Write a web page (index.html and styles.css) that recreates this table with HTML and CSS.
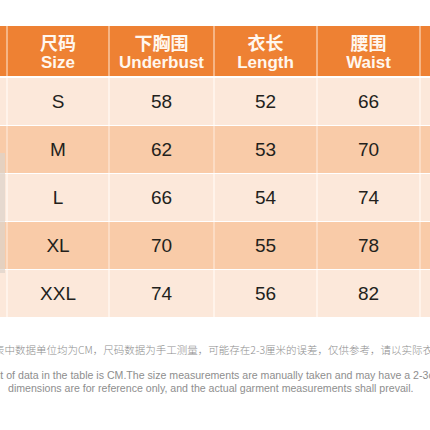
FILE: index.html
```html
<!DOCTYPE html>
<html>
<head>
    <meta charset="utf-8" />
    <link rel="stylesheet" href="styles.css">
</head>
<body>
    <section class="sheet">
        <div class="row head">
            <div class="cell edge"></div>
            <div class="cell"><span class="cn">尺码</span><span class="en">Size</span></div>
            <div class="cell"><span class="cn">下胸围</span><span class="en">Underbust</span></div>
            <div class="cell"><span class="cn">衣长</span><span class="en">Length</span></div>
            <div class="cell"><span class="cn">腰围</span><span class="en">Waist</span></div>
            <div class="cell edge"></div>
        </div>

        <div class="row light">
            <div class="cell edge"></div>
            <div class="cell">S</div><div class="cell">58</div><div class="cell">52</div><div class="cell">66</div>
            <div class="cell edge"></div>
        </div>
        <div class="row peach">
            <div class="cell edge"></div>
            <div class="cell">M</div><div class="cell">62</div><div class="cell">53</div><div class="cell">70</div>
            <div class="cell edge"></div>
        </div>
        <div class="row light">
            <div class="cell edge"></div>
            <div class="cell">L</div><div class="cell">66</div><div class="cell">54</div><div class="cell">74</div>
            <div class="cell edge"></div>
        </div>
        <div class="row peach">
            <div class="cell edge"></div>
            <div class="cell">XL</div><div class="cell">70</div><div class="cell">55</div><div class="cell">78</div>
            <div class="cell edge"></div>
        </div>
        <div class="row light">
            <div class="cell edge"></div>
            <div class="cell">XXL</div><div class="cell">74</div><div class="cell">56</div><div class="cell">82</div>
            <div class="cell edge"></div>
        </div>

        <div class="photo-edge"></div>
    </section>

    <section class="note">
        <p class="cn-line">表中数据单位均为CM，尺码数据为手工测量，可能存在2-3厘米的误差，仅供参考，请以实际衣服为准。</p>
        <p class="en-line first">The unit of data in the table is CM.The size measurements are manually taken and may have a 2-3cm error. The</p>
        <p class="en-line second">dimensions are for reference only, and the actual garment measurements shall prevail.</p>
    </section>
</body>
</html>
```

FILE: styles.css
```css
* {
    padding: 0;
    margin: 0;
    box-sizing: border-box;
}

body {
    background-color: white;
    overflow: hidden;
    width: 430px;
    height: 430px;
}

.sheet {
    position: relative;
    display: flex;
    flex-direction: column;
    gap: 1px;
    padding-top: 26px;
    background-color: white;
}

.row {
    display: grid;
    grid-template-columns: 6px 100px 103px 101px 101px 1fr;
    column-gap: 2px;
    height: 47px;
    font-family: 'Liberation Sans', Arial, sans-serif;
}

.cell {
    display: flex;
    flex-direction: column;
    align-items: center;
    justify-content: center;
    font-size: 19px;
    color: #231f1c;
}

.head {
    height: 50px;
    margin-bottom: 1px;
    background-color: #f6b585;
}
.head .cell {
    background-color: #ee8133;
    color: #fff7ef;
    font-weight: bold;
}
.head .cn {
    font-family: 'Noto Sans CJK SC', sans-serif;
    font-size: 18px;
    line-height: 22px;
}
.head .en {
    font-size: 17px;
    line-height: 19px;
}

.light {
    background-color: #fff3ea;
}
.light .cell {
    background-color: #fce8da;
}

.peach {
    background-color: #fcdcc4;
}
.peach .cell {
    background-color: #f9cba8;
}

/* bit of the product photo peeking in on the left */
.photo-edge {
    position: absolute;
    left: 0;
    top: 153px;
    width: 5px;
    height: 120px;
    background-color: #ddd3cb;
    opacity: 0.7;
}

.note {
    margin-top: 26px;
    color: #8e8e8e;
    white-space: nowrap;
}

.cn-line {
    font-family: 'Noto Sans CJK SC', sans-serif;
    font-weight: 300;
    font-size: 10.5px;
    line-height: 14px;
    margin-left: -6px;
    margin-bottom: 12px;
}

.en-line {
    font-family: 'Liberation Sans', Arial, sans-serif;
    font-size: 10.6px;
    line-height: 13px;
}
.en-line.first {
    margin-left: -35px;
}
.en-line.second {
    margin-left: 8px;
}
```
